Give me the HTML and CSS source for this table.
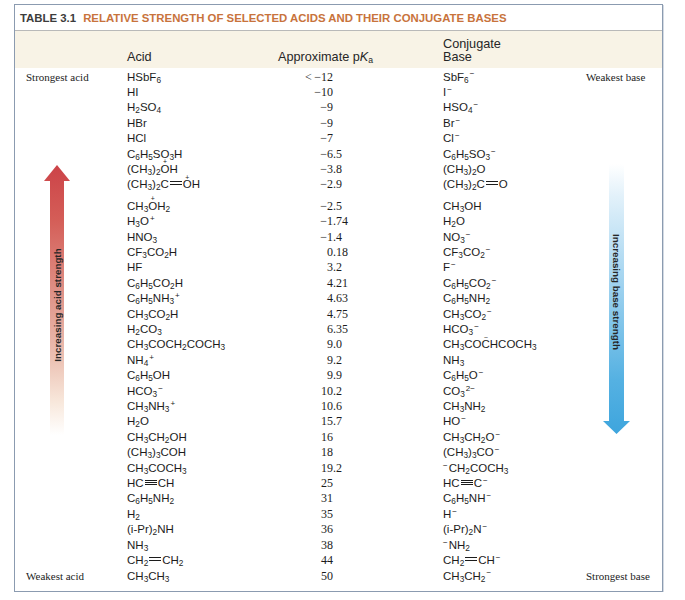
FILE: index.html
```html
<!DOCTYPE html>
<html>
<head>
<meta charset="utf-8">
<link rel="stylesheet" href="styles.css">
</head>
<body>
<div class="table">
  <div class="title"><span class="tnum">TABLE 3.1</span><span class="ttext">RELATIVE STRENGTH OF SELECTED ACIDS AND THEIR CONJUGATE BASES</span></div>
  <div class="head">
    <div></div>
    <div>Acid</div>
    <div>Approximate p<i>K</i><span class="s">a</span></div>
    <div>Conjugate<br>Base</div>
    <div></div>
  </div>
  <div class="rows">
    <div class="row"><span class="lab">Strongest acid</span><span class="f">HSbF<span class="s">6</span></span><span class="pi">&lt;&#8201;&minus;12</span><span class="pf"></span><span class="f">SbF<span class="s">6</span><span class="c">&minus;</span></span><span class="rlab">Weakest base</span></div>
    <div class="row"><span class="lab"></span><span class="f">HI</span><span class="pi">&minus;10</span><span class="pf"></span><span class="f">I<span class="c">&minus;</span></span><span class="rlab"></span></div>
    <div class="row"><span class="lab"></span><span class="f">H<span class="s">2</span>SO<span class="s">4</span></span><span class="pi">&minus;9</span><span class="pf"></span><span class="f">HSO<span class="s">4</span><span class="c">&minus;</span></span><span class="rlab"></span></div>
    <div class="row"><span class="lab"></span><span class="f">HBr</span><span class="pi">&minus;9</span><span class="pf"></span><span class="f">Br<span class="c">&minus;</span></span><span class="rlab"></span></div>
    <div class="row"><span class="lab"></span><span class="f">HCl</span><span class="pi">&minus;7</span><span class="pf"></span><span class="f">Cl<span class="c">&minus;</span></span><span class="rlab"></span></div>
    <div class="row"><span class="lab"></span><span class="f">C<span class="s">6</span>H<span class="s">5</span>SO<span class="s">3</span>H</span><span class="pi">&minus;6</span><span class="pf">.5</span><span class="f">C<span class="s">6</span>H<span class="s">5</span>SO<span class="s">3</span><span class="c">&minus;</span></span><span class="rlab"></span></div>
    <div class="row"><span class="lab"></span><span class="f">(CH<span class="s">3</span>)<span class="s">2</span><span class="o" data-m="+">O</span>H</span><span class="pi">&minus;3</span><span class="pf">.8</span><span class="f">(CH<span class="s">3</span>)<span class="s">2</span>O</span><span class="rlab"></span></div>
    <div class="row"><span class="lab"></span><span class="f">(CH<span class="s">3</span>)<span class="s">2</span>C<span class="b2"></span><span class="o" data-m="+">O</span>H</span><span class="pi">&minus;2</span><span class="pf">.9</span><span class="f">(CH<span class="s">3</span>)<span class="s">2</span>C<span class="b2"></span>O</span><span class="rlab"></span></div>
    <div class="row tall"><span class="lab"></span><span class="f">CH<span class="s">3</span><span class="o" data-m="+">O</span>H<span class="s">2</span></span><span class="pi">&minus;2</span><span class="pf">.5</span><span class="f">CH<span class="s">3</span>OH</span><span class="rlab"></span></div>
    <div class="row"><span class="lab"></span><span class="f">H<span class="s">3</span>O<span class="c">+</span></span><span class="pi">&minus;1</span><span class="pf">.74</span><span class="f">H<span class="s">2</span>O</span><span class="rlab"></span></div>
    <div class="row"><span class="lab"></span><span class="f">HNO<span class="s">3</span></span><span class="pi">&minus;1</span><span class="pf">.4</span><span class="f">NO<span class="s">3</span><span class="c">&minus;</span></span><span class="rlab"></span></div>
    <div class="row"><span class="lab"></span><span class="f">CF<span class="s">3</span>CO<span class="s">2</span>H</span><span class="pi">0</span><span class="pf">.18</span><span class="f">CF<span class="s">3</span>CO<span class="s">2</span><span class="c">&minus;</span></span><span class="rlab"></span></div>
    <div class="row"><span class="lab"></span><span class="f">HF</span><span class="pi">3</span><span class="pf">.2</span><span class="f">F<span class="c">&minus;</span></span><span class="rlab"></span></div>
    <div class="row"><span class="lab"></span><span class="f">C<span class="s">6</span>H<span class="s">5</span>CO<span class="s">2</span>H</span><span class="pi">4</span><span class="pf">.21</span><span class="f">C<span class="s">6</span>H<span class="s">5</span>CO<span class="s">2</span><span class="c">&minus;</span></span><span class="rlab"></span></div>
    <div class="row"><span class="lab"></span><span class="f">C<span class="s">6</span>H<span class="s">5</span>NH<span class="s">3</span><span class="c">+</span></span><span class="pi">4</span><span class="pf">.63</span><span class="f">C<span class="s">6</span>H<span class="s">5</span>NH<span class="s">2</span></span><span class="rlab"></span></div>
    <div class="row"><span class="lab"></span><span class="f">CH<span class="s">3</span>CO<span class="s">2</span>H</span><span class="pi">4</span><span class="pf">.75</span><span class="f">CH<span class="s">3</span>CO<span class="s">2</span><span class="c">&minus;</span></span><span class="rlab"></span></div>
    <div class="row"><span class="lab"></span><span class="f">H<span class="s">2</span>CO<span class="s">3</span></span><span class="pi">6</span><span class="pf">.35</span><span class="f">HCO<span class="s">3</span><span class="c">&minus;</span></span><span class="rlab"></span></div>
    <div class="row"><span class="lab"></span><span class="f">CH<span class="s">3</span>COCH<span class="s">2</span>COCH<span class="s">3</span></span><span class="pi">9</span><span class="pf">.0</span><span class="f">CH<span class="s">3</span>CO<span class="o" data-m="&minus;">C</span>HCOCH<span class="s">3</span></span><span class="rlab"></span></div>
    <div class="row"><span class="lab"></span><span class="f">NH<span class="s">4</span><span class="c">+</span></span><span class="pi">9</span><span class="pf">.2</span><span class="f">NH<span class="s">3</span></span><span class="rlab"></span></div>
    <div class="row"><span class="lab"></span><span class="f">C<span class="s">6</span>H<span class="s">5</span>OH</span><span class="pi">9</span><span class="pf">.9</span><span class="f">C<span class="s">6</span>H<span class="s">5</span>O<span class="c">&minus;</span></span><span class="rlab"></span></div>
    <div class="row"><span class="lab"></span><span class="f">HCO<span class="s">3</span><span class="c">&minus;</span></span><span class="pi">10</span><span class="pf">.2</span><span class="f">CO<span class="s">3</span><span class="c">2&minus;</span></span><span class="rlab"></span></div>
    <div class="row"><span class="lab"></span><span class="f">CH<span class="s">3</span>NH<span class="s">3</span><span class="c">+</span></span><span class="pi">10</span><span class="pf">.6</span><span class="f">CH<span class="s">3</span>NH<span class="s">2</span></span><span class="rlab"></span></div>
    <div class="row"><span class="lab"></span><span class="f">H<span class="s">2</span>O</span><span class="pi">15</span><span class="pf">.7</span><span class="f">HO<span class="c">&minus;</span></span><span class="rlab"></span></div>
    <div class="row"><span class="lab"></span><span class="f">CH<span class="s">3</span>CH<span class="s">2</span>OH</span><span class="pi">16</span><span class="pf"></span><span class="f">CH<span class="s">3</span>CH<span class="s">2</span>O<span class="c">&minus;</span></span><span class="rlab"></span></div>
    <div class="row"><span class="lab"></span><span class="f">(CH<span class="s">3</span>)<span class="s">3</span>COH</span><span class="pi">18</span><span class="pf"></span><span class="f">(CH<span class="s">3</span>)<span class="s">3</span>CO<span class="c">&minus;</span></span><span class="rlab"></span></div>
    <div class="row"><span class="lab"></span><span class="f">CH<span class="s">3</span>COCH<span class="s">3</span></span><span class="pi">19</span><span class="pf">.2</span><span class="f"><span class="cl">&minus;</span>CH<span class="s">2</span>COCH<span class="s">3</span></span><span class="rlab"></span></div>
    <div class="row"><span class="lab"></span><span class="f">HC<span class="b3"></span>CH</span><span class="pi">25</span><span class="pf"></span><span class="f">HC<span class="b3"></span>C<span class="c">&minus;</span></span><span class="rlab"></span></div>
    <div class="row"><span class="lab"></span><span class="f">C<span class="s">6</span>H<span class="s">5</span>NH<span class="s">2</span></span><span class="pi">31</span><span class="pf"></span><span class="f">C<span class="s">6</span>H<span class="s">5</span>NH<span class="c">&minus;</span></span><span class="rlab"></span></div>
    <div class="row"><span class="lab"></span><span class="f">H<span class="s">2</span></span><span class="pi">35</span><span class="pf"></span><span class="f">H<span class="c">&minus;</span></span><span class="rlab"></span></div>
    <div class="row"><span class="lab"></span><span class="f">(i-Pr)<span class="s">2</span>NH</span><span class="pi">36</span><span class="pf"></span><span class="f">(i-Pr)<span class="s">2</span>N<span class="c">&minus;</span></span><span class="rlab"></span></div>
    <div class="row"><span class="lab"></span><span class="f">NH<span class="s">3</span></span><span class="pi">38</span><span class="pf"></span><span class="f"><span class="cl">&minus;</span>NH<span class="s">2</span></span><span class="rlab"></span></div>
    <div class="row"><span class="lab"></span><span class="f">CH<span class="s">2</span><span class="b2"></span>CH<span class="s">2</span></span><span class="pi">44</span><span class="pf"></span><span class="f">CH<span class="s">2</span><span class="b2"></span>CH<span class="c">&minus;</span></span><span class="rlab"></span></div>
    <div class="row"><span class="lab">Weakest acid</span><span class="f">CH<span class="s">3</span>CH<span class="s">3</span></span><span class="pi">50</span><span class="pf"></span><span class="f">CH<span class="s">3</span>CH<span class="s">2</span><span class="c">&minus;</span></span><span class="rlab">Strongest base</span></div>
  </div>

  <svg class="arrow acid-arrow" width="26" height="270" viewBox="0 0 26 270">
    <defs>
      <linearGradient id="ga" x1="0" y1="0" x2="0" y2="1">
        <stop offset="0" stop-color="#cc4348"/>
        <stop offset="0.2" stop-color="#d45d57"/>
        <stop offset="0.5" stop-color="#e0978c"/>
        <stop offset="0.72" stop-color="#ecc2b4"/>
        <stop offset="0.88" stop-color="#f8e8dc"/>
        <stop offset="1" stop-color="#ffffff"/>
      </linearGradient>
    </defs>
    <polygon points="13,0 26,16 20,16 20,270 6,270 6,16 0,16" fill="url(#ga)"/>
    <text x="13" y="140" transform="rotate(-90 13 140)" class="atext">Increasing acid strength</text>
  </svg>

  <svg class="arrow base-arrow" width="27" height="270" viewBox="0 0 27 270">
    <defs>
      <linearGradient id="gb" x1="0" y1="0" x2="0" y2="1">
        <stop offset="0" stop-color="#ffffff"/>
        <stop offset="0.12" stop-color="#e2f1fa"/>
        <stop offset="0.45" stop-color="#9fd2ef"/>
        <stop offset="0.8" stop-color="#55b1e2"/>
        <stop offset="1" stop-color="#3ea5dd"/>
      </linearGradient>
    </defs>
    <polygon points="6,0 21,0 21,257 27,257 13.5,270 0,257 6,257" fill="url(#gb)"/>
    <text x="13.5" y="128" transform="rotate(90 13.5 128)" class="atext">Increasing base strength</text>
  </svg>
</div>
</body>
</html>
```

FILE: styles.css
```css
html, body {
  margin: 0;
  padding: 0;
  background: #ffffff;
}

body {
  font-family: "Liberation Sans", Arial, sans-serif;
  color: #1c1c1c;
}

.table {
  position: relative;
  margin: 4px 0 0 14px;
  width: 647px;
  border: 1px solid #8b9bb0;
  box-shadow: 1px 1px 0 #d3dae3;
  padding-bottom: 6.6px;
}

.title {
  height: 25px;
  line-height: 26px;
  padding-left: 5px;
  border-bottom: 1px solid #b9b9b9;
  font-weight: bold;
  font-size: 11.4px;
  white-space: nowrap;
}

.tnum {
  color: #3c3c3c;
  margin-right: 7px;
}

.ttext {
  color: #c8733c;
}

.head {
  display: grid;
  grid-template-columns: 112px 151px 165px 143px 76px;
  align-items: end;
  height: 33px;
  padding-bottom: 4px;
  background: #f8f3e6;
  font-size: 12.7px;
  line-height: 13px;
  color: #262626;
}

.head .s {
  font-size: 0.68em;
  vertical-align: -0.25em;
  line-height: 0;
}

.rows {
  display: flex;
  flex-direction: column;
  padding-top: 1.5px;
}

.row {
  display: grid;
  grid-template-columns: 112px 178px 28px 110px 143px 76px;
  height: 15.42px;
  line-height: 15.42px;
  white-space: nowrap;
}

.row.tall {
  padding-top: 6px;
}

.lab, .rlab {
  font-family: "Liberation Serif", "Times New Roman", serif;
  font-size: 11px;
}

.lab {
  padding-left: 11px;
}

.rlab {
  text-align: right;
  padding-right: 18px;
}

.f {
  font-size: 11.5px;
}

.pi, .pf {
  font-family: "Liberation Serif", "Times New Roman", serif;
  font-size: 12px;
}

.pi {
  text-align: right;
}

.s {
  font-size: 0.72em;
  vertical-align: -0.28em;
  line-height: 0;
}

.c {
  font-size: 0.7em;
  vertical-align: 0.5em;
  line-height: 0;
  margin-left: 1px;
}

.cl {
  font-size: 0.7em;
  vertical-align: 0.5em;
  line-height: 0;
  margin-right: 1px;
}

.o {
  position: relative;
  display: inline-block;
  line-height: 1;
}

.o::before {
  content: attr(data-m);
  position: absolute;
  left: 0;
  right: 0;
  top: -0.65em;
  text-align: center;
  font-size: 0.6em;
  line-height: 1;
}

.b2 {
  display: inline-block;
  width: 12px;
  height: 2px;
  border-top: 1px solid #1c1c1c;
  border-bottom: 1px solid #1c1c1c;
  vertical-align: 0.25em;
  margin: 0 1px;
}

.b3 {
  display: inline-block;
  width: 12px;
  height: 3px;
  border-top: 1px solid #1c1c1c;
  border-bottom: 1px solid #1c1c1c;
  background: linear-gradient(#1c1c1c, #1c1c1c) center / 100% 1px no-repeat;
  vertical-align: 0.2em;
  margin: 0 1px;
}

.arrow {
  position: absolute;
}

.acid-arrow {
  left: 29px;
  top: 160px;
}

.base-arrow {
  left: 588px;
  top: 159px;
}

.atext {
  font-family: "Liberation Sans", Arial, sans-serif;
  font-weight: bold;
  font-size: 9.8px;
  fill: #262626;
  text-anchor: middle;
  dominant-baseline: central;
}
```
